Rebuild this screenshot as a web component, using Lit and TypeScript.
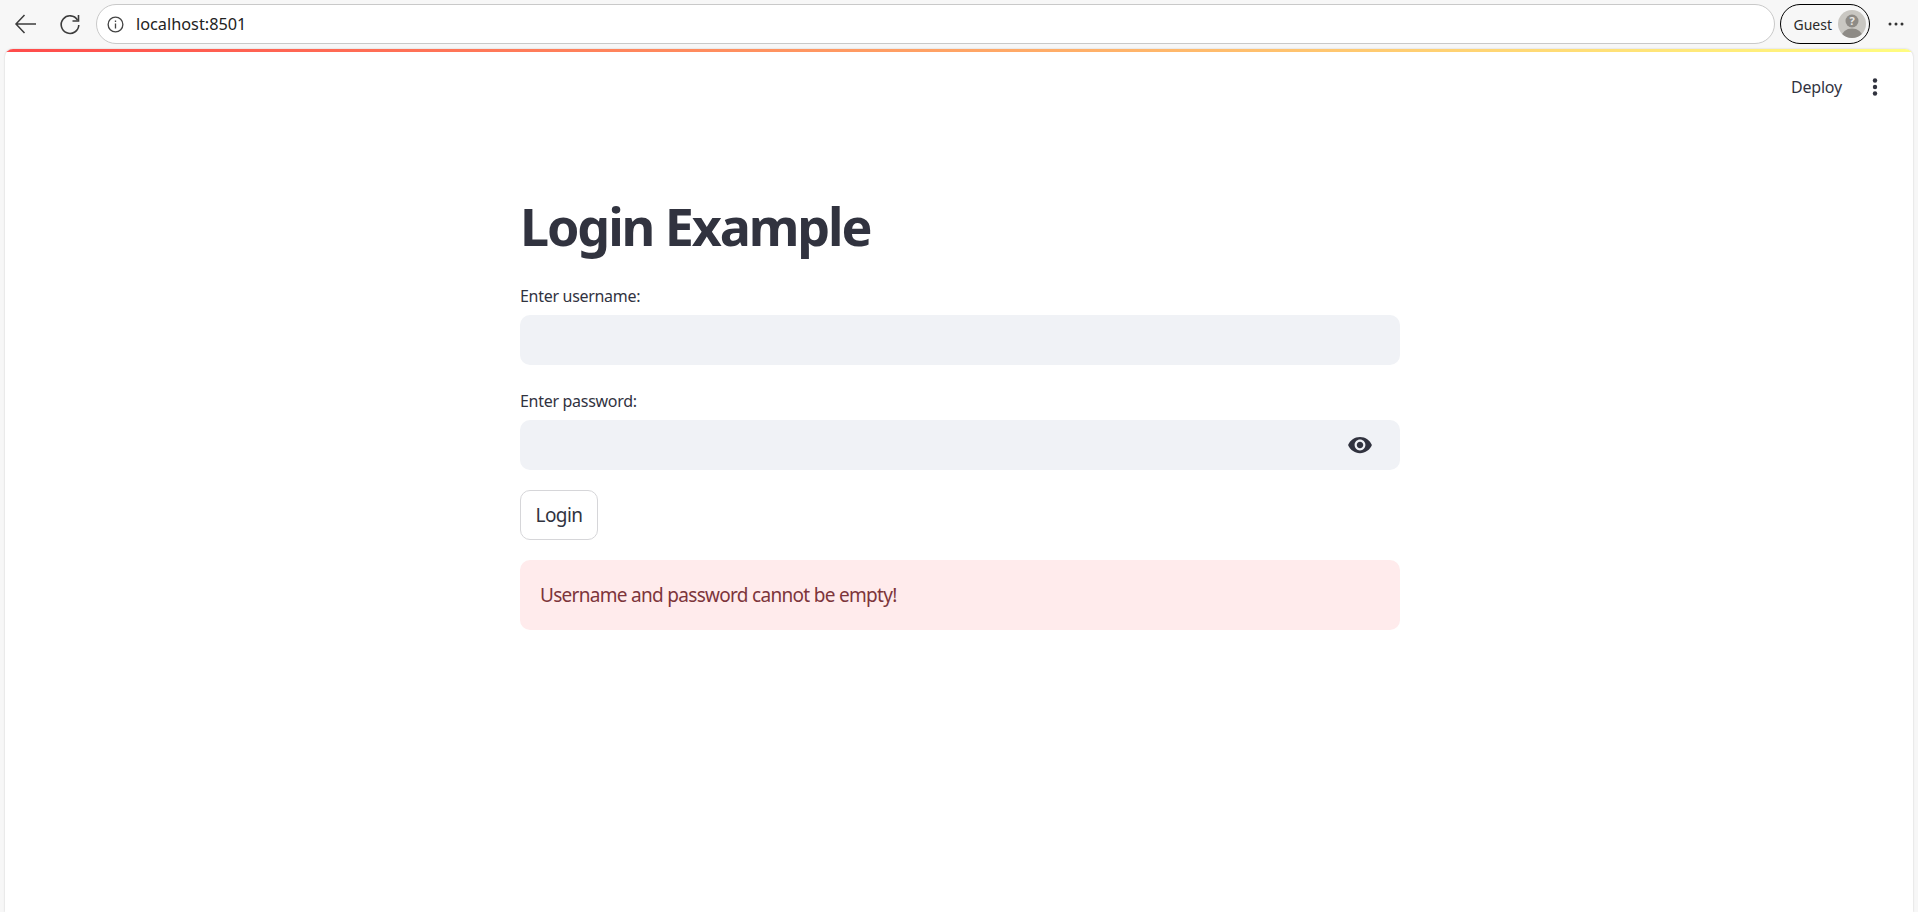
import { LitElement, html, css } from "lit";
import { customElement } from "lit/decorators.js";

@customElement("app-root")
export class AppRoot extends LitElement {
  static styles = css`
    :host {
      display: block;
      height: 912px;
      overflow: hidden;
      background: #f7f7f7;
      font-family: "Noto Sans", "Open Sans", sans-serif;
    }
    .chrome {
      height: 49px;
      box-sizing: border-box;
      padding: 4px 0 5px 13px;
      display: flex;
      align-items: center;
    }
    .nav {
      width: 24px;
      height: 24px;
      flex: none;
      color: #3c3c3c;
    }
    .reload {
      margin-left: 21px;
    }
    .omnibox {
      flex: 1;
      height: 40px;
      box-sizing: border-box;
      margin-left: 14px;
      padding-left: 10px;
      display: flex;
      align-items: center;
      gap: 12px;
      background: #fff;
      border: 1px solid #c9c9c9;
      border-radius: 20px;
      font-size: 16.3px;
      color: #222;
    }
    .info {
      width: 17px;
      height: 17px;
      color: #444;
    }
    .profile {
      margin-left: 5px;
      width: 90px;
      height: 40px;
      box-sizing: border-box;
      flex: none;
      display: flex;
      align-items: center;
      justify-content: flex-end;
      gap: 6px;
      padding-right: 3px;
      border: 1.5px solid #000;
      border-radius: 20px;
      font-size: 14px;
      color: #2a2a2a;
    }
    .avatar {
      width: 28px;
      height: 28px;
      flex: none;
    }
    .more {
      width: 18px;
      height: 18px;
      margin: 0 13px 0 17px;
      flex: none;
      color: #333;
    }
    .page {
      height: 863px;
      margin: 0 5px;
      background: #fff;
      border-radius: 8px 8px 0 0;
      overflow: hidden;
      box-shadow: 0 0 2px rgba(0, 0, 0, 0.2);
    }
    .rainbow {
      height: 3px;
      background: linear-gradient(90deg, #ff4b4b, #fffd80);
    }
    .toolbar {
      height: 70px;
      display: flex;
      justify-content: flex-end;
      align-items: center;
      padding-right: 26px;
      box-sizing: border-box;
      color: #31333f;
    }
    .deploy {
      font-size: 16px;
      letter-spacing: -0.2px;
      margin-right: 21px;
    }
    .kebab {
      width: 24px;
      height: 24px;
      color: #31333f;
    }
    .main {
      width: 880px;
      margin: 0 0 0 515px;
      color: #31333f;
    }
    h1 {
      margin: 0;
      padding-top: 70px;
      font-size: 52px;
      line-height: 68px;
      font-weight: 700;
      letter-spacing: -2.1px;
    }
    .label {
      font-size: 16px;
      line-height: 22px;
      letter-spacing: -0.3px;
      margin-bottom: 8px;
    }
    .first {
      margin-top: 25px;
    }
    .field {
      height: 50px;
      background: #f0f2f6;
      border-radius: 10px;
      display: flex;
      align-items: center;
      justify-content: flex-end;
      padding-right: 27px;
      margin-bottom: 25px;
    }
    .pass {
      margin-bottom: 20px;
    }
    .eye {
      width: 26px;
      height: 26px;
      color: #31333f;
    }
    .login {
      display: block;
      width: 78px;
      height: 50px;
      padding: 0;
      box-sizing: border-box;
      background: #fff;
      border: 1px solid #d6d6d9;
      border-radius: 10px;
      font: inherit;
      font-size: 19px;
      letter-spacing: -0.6px;
      color: #31333f;
    }
    .alert {
      margin-top: 20px;
      height: 70px;
      box-sizing: border-box;
      padding-left: 20px;
      display: flex;
      align-items: center;
      background: #ffebec;
      border-radius: 10px;
      font-size: 19px;
      letter-spacing: -0.7px;
      color: #7d353b;
    }
  `;

  render() {
    return html`
      <div class="chrome">
        <svg class="nav" viewBox="0 0 24 24" fill="none" stroke="currentColor" stroke-width="1.5">
          <path d="M23 12H3M11.500 3 3 12l8.500 9" />
        </svg>
        <svg class="nav reload" viewBox="0 0 24 24" fill="none" stroke="currentColor" stroke-width="1.600">
          <path d="M19.500 8A8.800 8.800 0 1 0 20.800 13" />
          <path d="M20.500 3v6h-6" />
        </svg>
        <div class="omnibox">
          <svg class="info" viewBox="0 0 18 18" fill="none" stroke="currentColor" stroke-width="1.400">
            <circle cx="9" cy="9" r="7.800" />
            <path d="M9 8v5.200M9 4.800v1.600" />
          </svg>
          <span>localhost:8501</span>
        </div>
        <div class="profile">
          <span>Guest</span>
          <svg class="avatar" viewBox="0 0 28 28">
            <defs>
              <clipPath id="av"><circle cx="14" cy="14" r="14" /></clipPath>
            </defs>
            <circle cx="14" cy="14" r="14" fill="#c9c7c2" />
            <ellipse cx="14" cy="27" rx="10.500" ry="8.500" fill="#8e8b86" clip-path="url(#av)" />
            <circle cx="14" cy="11" r="6.500" fill="#8e8b86" />
            <text x="14" y="15" text-anchor="middle" font-size="11" font-weight="700" fill="#e8e7e4">?</text>
          </svg>
        </div>
        <svg class="more" viewBox="0 0 18 18" fill="currentColor">
          <circle cx="3" cy="9" r="1.500" />
          <circle cx="9" cy="9" r="1.500" />
          <circle cx="15" cy="9" r="1.500" />
        </svg>
      </div>
      <div class="page">
        <div class="rainbow"></div>
        <div class="toolbar">
          <span class="deploy">Deploy</span>
          <svg class="kebab" viewBox="0 0 24 24" fill="currentColor">
            <circle cx="12" cy="5.500" r="2.200" />
            <circle cx="12" cy="12" r="2.200" />
            <circle cx="12" cy="18.500" r="2.200" />
          </svg>
        </div>
        <div class="main">
          <h1>Login Example</h1>
          <div class="label first">Enter username:</div>
          <div class="field"></div>
          <div class="label">Enter password:</div>
          <div class="field pass">
            <svg class="eye" viewBox="0 0 24 24" fill="currentColor">
              <path
                d="M12 4.500C7 4.500 2.730 7.610 1 12c1.730 4.390 6 7.500 11 7.500s9.270-3.110 11-7.500c-1.730-4.390-6-7.500-11-7.500zM12 17c-2.760 0-5-2.240-5-5s2.240-5 5-5 5 2.240 5 5-2.240 5-5 5zm0-8c-1.660 0-3 1.340-3 3s1.340 3 3 3 3-1.340 3-3-1.340-3-3-3z"
              />
            </svg>
          </div>
          <button class="login">Login</button>
          <div class="alert">Username and password cannot be empty!</div>
        </div>
      </div>
    `;
  }
}
